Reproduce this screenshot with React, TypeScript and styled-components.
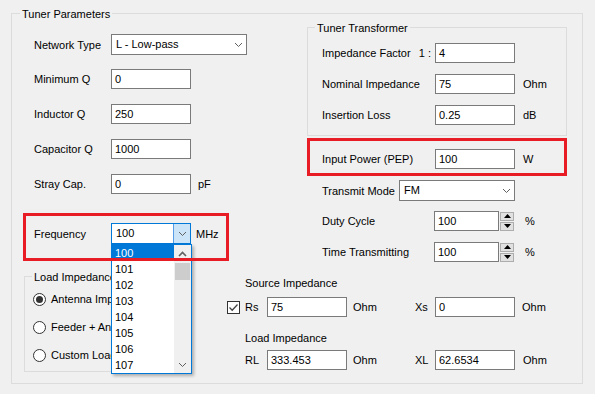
import React from 'react'
import styled, { createGlobalStyle } from 'styled-components'

const GlobalStyle = createGlobalStyle`
  html, body {
    margin: 0;
    padding: 0;
    background: #f0f0f0;
  }
  body {
    font-family: "Liberation Sans", Arial, sans-serif;
    font-size: 11px;
    color: #000;
  }
`

const Window = styled.div`
  width: 595px;
  height: 394px;
  box-sizing: border-box;
  padding: 13px 12px 0 11px;
  background: #f0f0f0;
  overflow: hidden;
`

const Group = styled.div<{ $width?: number; $height: number; $top?: number; $left?: number }>`
  box-sizing: border-box;
  border: 1px solid #dcdcdc;
  width: ${p => (p.$width ? `${p.$width}px` : 'auto')};
  height: ${p => p.$height}px;
  margin-top: ${p => p.$top || 0}px;
  margin-left: ${p => p.$left || 0}px;
`

const GroupTitle = styled.div<{ $indent: number }>`
  width: fit-content;
  height: 14px;
  line-height: 14px;
  margin: -7px 0 0 ${p => p.$indent}px;
  padding: 0 2px;
  background: #f0f0f0;
  white-space: nowrap;
`

const Columns = styled.div`
  display: flex;
`

const LeftCol = styled.div`
  width: 215px;
  flex: none;
  box-sizing: border-box;
  padding-left: 11px;
  display: flex;
  flex-direction: column;
`

const RightCol = styled.div`
  flex: 1;
  display: flex;
  flex-direction: column;
`

const Row = styled.div<{ $top?: number; $indent?: number; $h?: number }>`
  display: flex;
  align-items: center;
  height: ${p => p.$h || 20}px;
  margin-top: ${p => p.$top || 0}px;
  padding-left: ${p => p.$indent || 0}px;
  white-space: nowrap;
`

const Label = styled.div<{ $w: number }>`
  width: ${p => p.$w}px;
  flex: none;
  display: flex;
  justify-content: space-between;
  align-items: center;
`

const Ratio = styled.span`
  padding-right: 4px;
`

const Unit = styled.div<{ $gap: number; $w?: number }>`
  margin-left: ${p => p.$gap}px;
  width: ${p => (p.$w ? `${p.$w}px` : 'auto')};
  flex: none;
`

const TextBox = styled.div<{ $w: number }>`
  box-sizing: border-box;
  width: ${p => p.$w}px;
  height: 20px;
  flex: none;
  border: 1px solid #7a7a7a;
  background: #fff;
  padding-left: 3px;
  line-height: 18px;
`

const ComboWrap = styled.div`
  position: relative;
  flex: none;
`

const Combo = styled.div<{ $w: number; $focused?: boolean }>`
  box-sizing: border-box;
  width: ${p => p.$w}px;
  height: 21px;
  display: flex;
  border: 1px solid ${p => (p.$focused ? '#0078d7' : '#7a7a7a')};
  background: #fff;
`

const ComboText = styled.div`
  flex: 1;
  padding-left: 4px;
  line-height: 19px;
`

const ComboButton = styled.div<{ $focused?: boolean }>`
  width: 16px;
  flex: none;
  display: flex;
  align-items: center;
  justify-content: center;
  background: ${p => (p.$focused ? '#cce4f7' : 'transparent')};
  border-left: 1px solid ${p => (p.$focused ? '#569de5' : 'transparent')};
`

const DropList = styled.div`
  position: absolute;
  top: 100%;
  left: 0;
  z-index: 1;
  box-sizing: border-box;
  width: 81px;
  height: 130px;
  display: flex;
  border: 1px solid #0078d7;
  background: #fff;
  box-shadow: 2px 2px 3px rgba(0, 0, 0, 0.28);
`

const Items = styled.div`
  flex: 1;
`

const Item = styled.div<{ $selected?: boolean }>`
  height: 16px;
  line-height: 16px;
  padding-left: 3px;
  background: ${p => (p.$selected ? '#0078d7' : 'transparent')};
  color: ${p => (p.$selected ? '#fff' : '#000')};
`

const ScrollBar = styled.div`
  width: 17px;
  flex: none;
  display: flex;
  flex-direction: column;
  background: #f0f0f0;
`

const ScrollArrow = styled.div`
  height: 17px;
  display: flex;
  align-items: center;
  justify-content: center;
`

const Thumb = styled.div`
  height: 17px;
  margin: 1px 1px 0;
  background: #cdcdcd;
`

const ScrollTrack = styled.div`
  flex: 1;
`

const Highlight = styled.div<{ $w: number; $pad: string; $top: number; $left?: number }>`
  position: relative;
  box-sizing: border-box;
  width: ${p => p.$w}px;
  margin-top: ${p => p.$top}px;
  margin-left: ${p => p.$left || 0}px;
  border: 3px solid transparent;
  padding: ${p => p.$pad};
  &::after {
    content: '';
    position: absolute;
    inset: -3px;
    border: 3px solid #e81c24;
    z-index: 2;
    pointer-events: none;
  }
`

const Spinner = styled.div`
  margin-left: 1px;
  display: flex;
  flex-direction: column;
  gap: 1px;
  flex: none;
`

const SpinButton = styled.div`
  box-sizing: border-box;
  width: 14px;
  height: 9px;
  border: 1px solid #adadad;
  background: #e1e1e1;
  display: flex;
  align-items: center;
  justify-content: center;
`

const RadioList = styled.div`
  margin-top: 1px;
  padding-left: 8px;
`

const RadioRow = styled.div`
  height: 28px;
  display: flex;
  align-items: center;
  gap: 5px;
  white-space: nowrap;
`

const RadioDot = styled.div<{ $checked?: boolean }>`
  box-sizing: border-box;
  width: 13px;
  height: 13px;
  flex: none;
  border: 1px solid #333;
  border-radius: 50%;
  background: #fff;
  display: flex;
  align-items: center;
  justify-content: center;
  &::after {
    content: '';
    width: 7px;
    height: 7px;
    border-radius: 50%;
    background: ${p => (p.$checked ? '#333' : 'transparent')};
  }
`

const CheckBox = styled.div`
  box-sizing: border-box;
  width: 13px;
  height: 13px;
  flex: none;
  border: 1px solid #333;
  background: #fff;
  display: flex;
  align-items: center;
  justify-content: center;
  margin-right: 5px;
`

const SectionLabel = styled.div<{ $top: number }>`
  height: 14px;
  line-height: 14px;
  margin-top: ${p => p.$top}px;
  padding-left: 18px;
`

const Chevron = ({ up }: { up?: boolean }) => (
  <svg width="9" height="6" viewBox="0 0 9 6">
    <path
      d={up ? 'M1 5 L4.5 1.5 L8 5' : 'M1 1 L4.5 4.5 L8 1'}
      fill="none"
      stroke="#606060"
      strokeWidth={up ? 1.6 : 1}
    />
  </svg>
)

const Tri = ({ up }: { up?: boolean }) => (
  <svg width="7" height="4" viewBox="0 0 7 4">
    <polygon points={up ? '0,4 7,4 3.5,0' : '0,0 7,0 3.5,4'} fill="#000" />
  </svg>
)

const Spin = () => (
  <Spinner>
    <SpinButton><Tri up /></SpinButton>
    <SpinButton><Tri /></SpinButton>
  </Spinner>
)

const freqs = ['100', '101', '102', '103', '104', '105', '106', '107']

export default function App() {
  return (
    <Window>
      <GlobalStyle />
      <Group $height={371}>
        <GroupTitle $indent={8}>Tuner Parameters</GroupTitle>
        <Columns>
          <LeftCol>
            <Row $top={13} $indent={11} $h={21}>
              <Label $w={77}>Network Type</Label>
              <ComboWrap>
                <Combo $w={136}>
                  <ComboText>L - Low-pass</ComboText>
                  <ComboButton><Chevron /></ComboButton>
                </Combo>
              </ComboWrap>
            </Row>
            <Row $top={14} $indent={11}>
              <Label $w={77}>Minimum Q</Label>
              <TextBox $w={80}>0</TextBox>
            </Row>
            <Row $top={15} $indent={11}>
              <Label $w={77}>Inductor Q</Label>
              <TextBox $w={80}>250</TextBox>
            </Row>
            <Row $top={15} $indent={11}>
              <Label $w={77}>Capacitor Q</Label>
              <TextBox $w={80}>1000</TextBox>
            </Row>
            <Row $top={15} $indent={11}>
              <Label $w={77}>Stray Cap.</Label>
              <TextBox $w={80}>0</TextBox>
              <Unit $gap={7}>pF</Unit>
            </Row>

            <Highlight $w={206} $top={19} $pad="7px 0 14px 8px">
              <Row $h={21}>
                <Label $w={77}>Frequency</Label>
                <ComboWrap>
                  <Combo $w={80} $focused>
                    <ComboText>100</ComboText>
                    <ComboButton $focused><Chevron /></ComboButton>
                  </Combo>
                  <DropList>
                    <Items>
                      {freqs.map((f, i) => (
                        <Item key={f} $selected={i === 0}>{f}</Item>
                      ))}
                    </Items>
                    <ScrollBar>
                      <ScrollArrow><Chevron up /></ScrollArrow>
                      <Thumb />
                      <ScrollTrack />
                      <ScrollArrow><Chevron /></ScrollArrow>
                    </ScrollBar>
                  </DropList>
                </ComboWrap>
                <Unit $gap={5}>MHz</Unit>
              </Row>
            </Highlight>

            <Group $height={96} $top={15} $left={1} $width={162}>
              <GroupTitle $indent={7}>Load Impedance</GroupTitle>
              <RadioList>
                <RadioRow><RadioDot $checked />Antenna Impedance</RadioRow>
                <RadioRow><RadioDot />Feeder + Antenna</RadioRow>
                <RadioRow><RadioDot />Custom Load</RadioRow>
              </RadioList>
            </Group>
          </LeftCol>

          <RightCol>
            <Group $height={109} $top={6} $left={80} $width={260}>
              <GroupTitle $indent={7}>Tuner Transformer</GroupTitle>
              <Row $top={8} $indent={14}>
                <Label $w={113}>Impedance Factor<Ratio>1 :</Ratio></Label>
                <TextBox $w={80}>4</TextBox>
              </Row>
              <Row $top={11} $indent={14}>
                <Label $w={113}>Nominal Impedance</Label>
                <TextBox $w={80}>75</TextBox>
                <Unit $gap={8}>Ohm</Unit>
              </Row>
              <Row $top={11} $indent={14}>
                <Label $w={113}>Insertion Loss</Label>
                <TextBox $w={80}>0.25</TextBox>
                <Unit $gap={8}>dB</Unit>
              </Row>
            </Group>

            <Highlight $w={260} $top={2} $left={80} $pad="8px 0 4px 12px">
              <Row>
                <Label $w={113}>Input Power (PEP)</Label>
                <TextBox $w={80}>100</TextBox>
                <Unit $gap={8}>W</Unit>
              </Row>
            </Highlight>

            <Row $top={4} $indent={95} $h={21}>
              <Label $w={77}>Transmit Mode</Label>
              <ComboWrap>
                <Combo $w={116}>
                  <ComboText>FM</ComboText>
                  <ComboButton><Chevron /></ComboButton>
                </Combo>
              </ComboWrap>
            </Row>
            <Row $top={10} $indent={95}>
              <Label $w={112}>Duty Cycle</Label>
              <TextBox $w={65}>100</TextBox>
              <Spin />
              <Unit $gap={11}>%</Unit>
            </Row>
            <Row $top={11} $indent={95}>
              <Label $w={112}>Time Transmitting</Label>
              <TextBox $w={65}>100</TextBox>
              <Spin />
              <Unit $gap={11}>%</Unit>
            </Row>

            <SectionLabel $top={14}>Source Impedance</SectionLabel>
            <Row $top={7}>
              <CheckBox>
                <svg width="11" height="11" viewBox="0 0 11 11">
                  <path d="M1.5 5.5 L4.2 8.2 L9.5 2.5" fill="none" stroke="#444" strokeWidth="1.3" />
                </svg>
              </CheckBox>
              <Label $w={22}>Rs</Label>
              <TextBox $w={80}>75</TextBox>
              <Unit $gap={6} $w={62}>Ohm</Unit>
              <Label $w={20}>Xs</Label>
              <TextBox $w={80}>0</TextBox>
              <Unit $gap={7}>Ohm</Unit>
            </Row>

            <SectionLabel $top={14}>Load Impedance</SectionLabel>
            <Row $top={5} $indent={18}>
              <Label $w={22}>RL</Label>
              <TextBox $w={80}>333.453</TextBox>
              <Unit $gap={6} $w={62}>Ohm</Unit>
              <Label $w={20}>XL</Label>
              <TextBox $w={80}>62.6534</TextBox>
              <Unit $gap={8}>Ohm</Unit>
            </Row>
          </RightCol>
        </Columns>
      </Group>
    </Window>
  )
}
